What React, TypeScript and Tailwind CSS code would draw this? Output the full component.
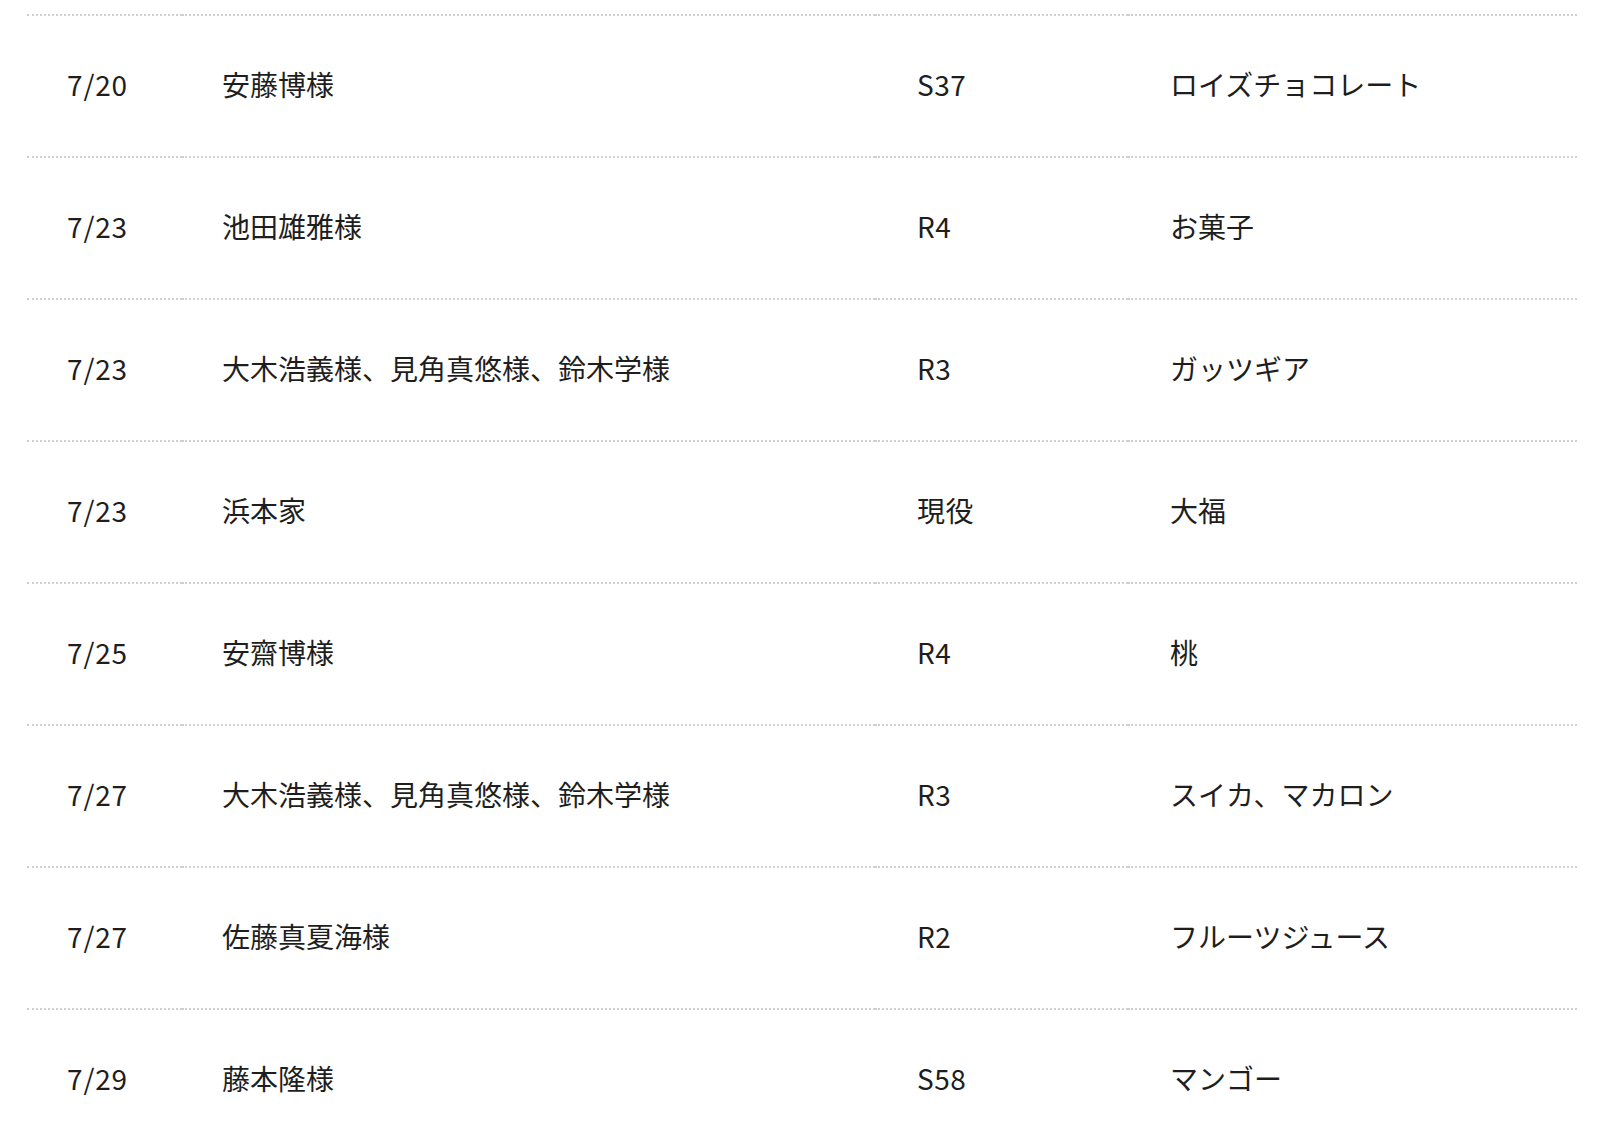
import React from 'react';

const rows = [
  { date: '7/20', name: '安藤博様', gen: 'S37', gift: 'ロイズチョコレート' },
  { date: '7/23', name: '池田雄雅様', gen: 'R4', gift: 'お菓子' },
  { date: '7/23', name: '大木浩義様、見角真悠様、鈴木学様', gen: 'R3', gift: 'ガッツギア' },
  { date: '7/23', name: '浜本家', gen: '現役', gift: '大福' },
  { date: '7/25', name: '安齋博様', gen: 'R4', gift: '桃' },
  { date: '7/27', name: '大木浩義様、見角真悠様、鈴木学様', gen: 'R3', gift: 'スイカ、マカロン' },
  { date: '7/27', name: '佐藤真夏海様', gen: 'R2', gift: 'フルーツジュース' },
  { date: '7/29', name: '藤本隆様', gen: 'S58', gift: 'マンゴー' },
];

const cell = 'flex items-center border-b-2 border-dotted border-[#cfcfcf]';

export default function App() {
  return (
    <div
      className="h-[1145px] overflow-hidden bg-white text-[28px] text-[#1e1e1e]"
      style={{ fontFamily: '"Noto Sans CJK JP", "Noto Sans", sans-serif' }}
    >
      <div className="mx-[27px] w-[1550px]">
        <div className="grid grid-cols-[155px_693px_253px_449px]">
          <div className={`${cell} h-[16px]`} />
          <div className={`${cell} h-[16px]`} />
          <div className={`${cell} h-[16px]`} />
          <div className={`${cell} h-[16px]`} />
          {rows.map((r, i) => (
            <React.Fragment key={i}>
              <div className={`${cell} h-[142px] pl-10 pb-[4px] tracking-[0.03em]`}>{r.date}</div>
              <div className={`${cell} h-[142px] pl-10 pb-[4px]`}>{r.name}</div>
              <div className={`${cell} h-[142px] pl-[42px] pb-[4px] tracking-[0.02em]`}>{r.gen}</div>
              <div className={`${cell} h-[142px] pl-[42px] pb-[4px]`}>{r.gift}</div>
            </React.Fragment>
          ))}
        </div>
      </div>
    </div>
  );
}
